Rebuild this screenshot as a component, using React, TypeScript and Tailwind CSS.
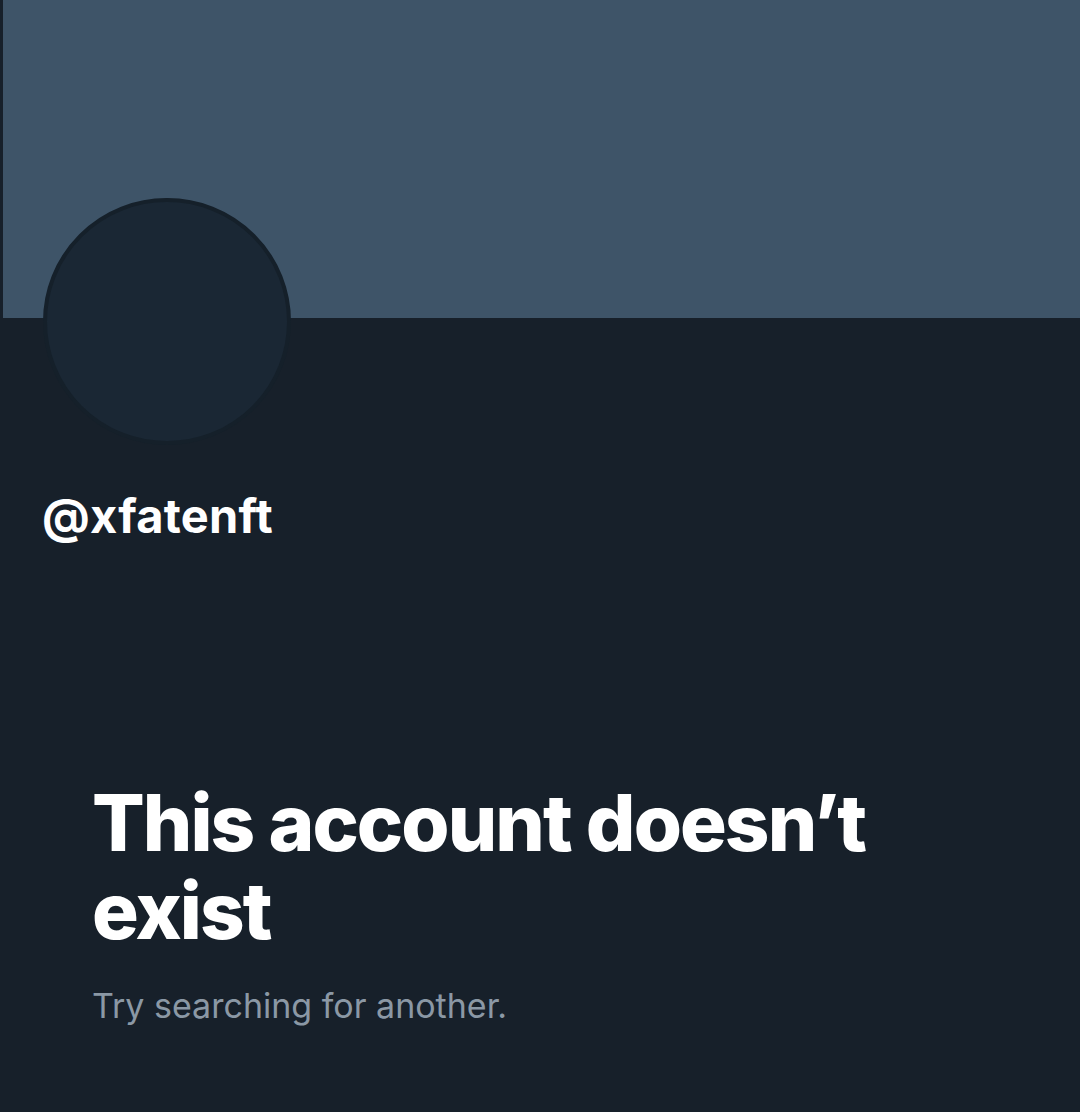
export default function App() {
  return (
    <div className="min-h-[1112px] w-[1080px] bg-[#17202a] font-['Inter',sans-serif]">
      {/* Banner */}
      <div className="ml-[3px] h-[318px] bg-[#3e5468]" />

      {/* Avatar */}
      <div className="-mt-[120px] ml-[43px] h-[247px] w-[248px] rounded-full border-4 border-[#15202a] bg-[#1a2734]" />

      {/* Handle */}
      <div className="mt-[45px] ml-[42px] text-[47px] font-bold leading-[52px] tracking-[0.005em] text-white">
        @xfatenft
      </div>

      {/* Empty state */}
      <div className="mt-[237px] ml-[92px] w-[820px]">
        <h1 className="text-[78px] font-extrabold leading-[88px] tracking-tight text-white">
          This account doesn’t exist
        </h1>
        <p className="mt-[29px] text-[34px] leading-[44px] text-[#8b98a5]">
          Try searching for another.
        </p>
      </div>
    </div>
  );
}
